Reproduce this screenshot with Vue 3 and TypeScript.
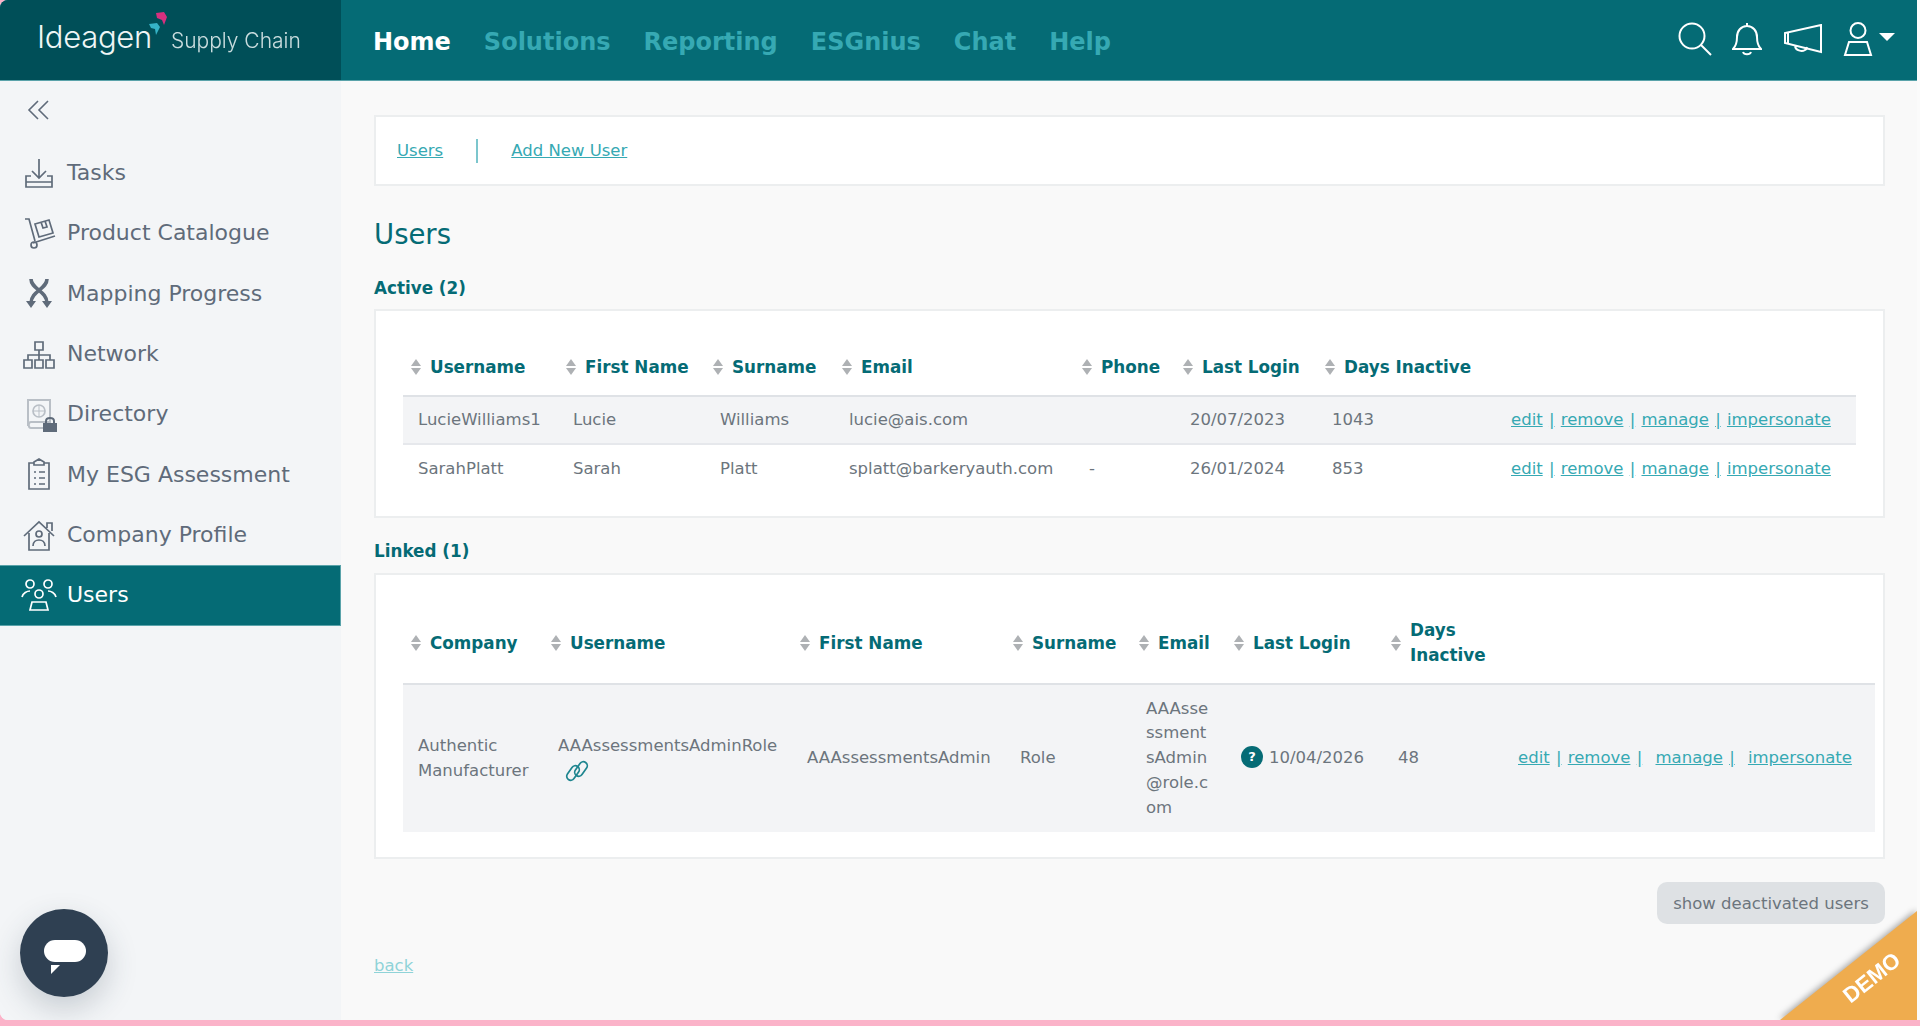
<script setup lang="ts">
interface Col { w: number; label?: string; lines?: string[] }
const activeCols: Col[] = [
  { w: 155, label: 'Username' }, { w: 147, label: 'First Name' }, { w: 129, label: 'Surname' },
  { w: 240, label: 'Email' }, { w: 101, label: 'Phone' }, { w: 142, label: 'Last Login' },
  { w: 179, label: 'Days Inactive' }, { w: 360 }
]
const activeRows = [
  ['LucieWilliams1', 'Lucie', 'Williams', 'lucie@ais.com', '', '20/07/2023', '1043'],
  ['SarahPlatt', 'Sarah', 'Platt', 'splatt@barkeryauth.com', '-', '26/01/2024', '853']
]
const linkedCols: Col[] = [
  { w: 140, label: 'Company' }, { w: 249, label: 'Username' }, { w: 213, label: 'First Name' },
  { w: 126, label: 'Surname' }, { w: 95, label: 'Email' }, { w: 157, label: 'Last Login' },
  { w: 120, lines: ['Days', 'Inactive'] }, { w: 372 }
]
const nav = ['Solutions', 'Reporting', 'ESGnius', 'Chat', 'Help']
const menu = ['Tasks', 'Product Catalogue', 'Mapping Progress', 'Network', 'Directory', 'My ESG Assessment', 'Company Profile', 'Users']
</script>

<template>
  <div class="app">
    <header class="top">
      <div class="brand">
        <span class="ideagen">Ideagen</span>
        <svg class="mark" viewBox="0 0 22 28" width="22" height="28">
          <path d="M9 3l8-1 3 5-3 8-2-5-5-2z" fill="#d6307f" />
          <path d="M2 14l8-1 3 4-4 8-1-6-4-1z" fill="#35b3c6" />
        </svg>
        <span class="supply">Supply Chain</span>
      </div>
      <nav class="mainnav">
        <a class="home">Home</a>
        <a v-for="n in nav" :key="n">{{ n }}</a>
      </nav>
      <div class="tools">
        <svg class="srch" width="34" height="34" viewBox="0 0 34 34" fill="none" stroke="#fff" stroke-width="2">
          <circle cx="14" cy="14" r="12.5" /><path d="M23 23l10 10" />
        </svg>
        <svg width="30" height="34" viewBox="0 0 30 34" fill="none" stroke="#fff" stroke-width="2">
          <path d="M1 27h28c-3-3-4-6-4-12 0-6-4-11-10-11S5 9 5 15c0 6-1 9-4 12zM15 4V1M11 30c1 3 7 3 8 0" />
        </svg>
        <svg width="38" height="30" viewBox="0 0 38 30" fill="none" stroke="#fff" stroke-width="2">
          <path d="M1 9v10l36 9V1zM4 9v10M11 21c0 7 11 8 12 2" />
        </svg>
        <div class="usr">
          <svg width="30" height="34" viewBox="0 0 30 34" fill="none" stroke="#fff" stroke-width="2">
            <circle cx="15" cy="8.5" r="7.5" /><path d="M6 20h18l4 13H2z" />
          </svg>
          <span class="caret"></span>
        </div>
      </div>
    </header>

    <div class="body">
      <aside class="side">
        <svg class="collapse" width="24" height="20" viewBox="0 0 24 20" fill="none" stroke="#5f6b7a" stroke-width="1.6">
          <path d="M11 1L2 10l9 9M21 1l-9 9 9 9" />
        </svg>
        <ul class="menu">
          <li v-for="m in menu" :key="m" :class="{ on: m === 'Users' }">
            <svg class="ic" width="36" height="36" viewBox="0 0 36 36" fill="none" stroke="currentColor" stroke-width="1.7">
              <g v-if="m === 'Tasks'">
                <path d="M18 4v19M11 16l7 7 7-7M10 21H5v11h26V21h-5M5 27h26" />
              </g>
              <g v-else-if="m === 'Product Catalogue'">
                <path d="M4 4h4l6 22M12 28l22-7" /><circle cx="13" cy="30" r="3" />
                <path d="M14 9l14-4 4 13-14 4zM20 7l2 6 4-1-2-6" />
              </g>
              <g v-else-if="m === 'Mapping Progress'">
                <path d="M10 4c0 10 16 12 16 24M26 4c0 10-16 12-16 24" stroke-width="3.6" />
                <path d="M5 26h10l-5 7zM21 26h10l-5 7z" fill="currentColor" stroke="none" />
              </g>
              <g v-else-if="m === 'Network'">
                <path d="M14 6h8v8h-8zM3 24h8v8H3zM14 24h8v8h-8zM25 24h8v8h-8zM18 14v10M7 24v-5h22v5" />
              </g>
              <g v-else-if="m === 'Directory'">
                <path d="M7 30V4h22v22H10c-3 0-3 6 0 6h14" stroke="#b9bfc6" stroke-width="2" />
                <circle cx="18" cy="15" r="6" stroke="#b9bfc6" /><path d="M12 15h12M18 9v12" stroke="#b9bfc6" stroke-width="1" />
                <rect x="22" y="27" width="14" height="11" fill="currentColor" stroke="none" />
                <path d="M25 27v-2c0-4 8-4 8 0v2" stroke-width="2" />
              </g>
              <g v-else-if="m === 'My ESG Assessment'">
                <path d="M13 7h-5v26h20V7h-5M13 9V6l5-3 5 3v3zM13 16h2M13 22h2M13 28h2M18 16h6M18 22h6M18 28h6" />
              </g>
              <g v-else-if="m === 'Company Profile'">
                <path d="M3 19L18 5l15 14M8 16v17h20V16M26 11V6h5v8" />
                <circle cx="18" cy="17" r="3" /><path d="M12 29c0-8 12-8 12 0" />
              </g>
              <g v-else>
                <circle cx="9" cy="7" r="4" /><circle cx="27" cy="7" r="4" /><circle cx="18" cy="17" r="4" />
                <path d="M1 20c1-4 5-6 8-6M35 20c-1-4-5-6-8-6M11 25h14l2 8H9z" />
              </g>
            </svg>
            <span>{{ m }}</span>
          </li>
        </ul>
        <div class="chat">
          <span class="pill"></span>
          <span class="tail"></span>
        </div>
      </aside>

      <main class="main">
        <div class="crumbs card">
          <a>Users</a>
          <i class="sep"></i>
          <a>Add New User</a>
        </div>
        <h1>Users</h1>

        <h2>Active (2)</h2>
        <div class="card tablecard">
          <table class="tbl act">
            <colgroup><col v-for="(c, i) in activeCols" :key="i" :style="{ width: c.w + 'px' }" /></colgroup>
            <thead>
              <tr>
                <th v-for="(c, i) in activeCols" :key="i">
                  <div v-if="c.label" class="th"><span class="sort"></span>{{ c.label }}</div>
                </th>
              </tr>
            </thead>
            <tbody>
              <tr v-for="(r, ri) in activeRows" :key="ri">
                <td v-for="(v, vi) in r" :key="vi">{{ v }}</td>
                <td class="acts"><a>edit</a> <a class="p">|</a> <a>remove</a> <a class="p">|</a> <a>manage</a> <a class="p">|</a> <a>impersonate</a></td>
              </tr>
            </tbody>
          </table>
        </div>

        <h2 class="linked">Linked (1)</h2>
        <div class="card tablecard lcard">
          <table class="tbl lnk">
            <colgroup><col v-for="(c, i) in linkedCols" :key="i" :style="{ width: c.w + 'px' }" /></colgroup>
            <thead>
              <tr>
                <th v-for="(c, i) in linkedCols" :key="i">
                  <div v-if="c.label" class="th"><span class="sort"></span>{{ c.label }}</div>
                  <div v-else-if="c.lines" class="th"><span class="sort"></span><span class="two"><span v-for="l in c.lines" :key="l">{{ l }}</span></span></div>
                </th>
              </tr>
            </thead>
            <tbody>
              <tr>
                <td>Authentic<br />Manufacturer</td>
                <td>AAAssessmentsAdminRole<br />
                  <svg class="chain" width="30" height="24" viewBox="0 0 30 24" fill="none" stroke="#1e858f" stroke-width="1.7">
                    <rect x="7" y="6" width="8" height="16" rx="4" transform="rotate(35 11 14)" />
                    <rect x="15" y="2" width="8" height="16" rx="4" transform="rotate(35 19 10)" />
                  </svg>
                </td>
                <td>AAAssessmentsAdmin</td>
                <td>Role</td>
                <td class="mail">AAAsse<br />ssment<br />sAdmin<br />@role.c<br />om</td>
                <td class="login"><span class="q">?</span>10/04/2026</td>
                <td>48</td>
                <td class="acts wide"><a>edit</a> <a class="p">|</a> <a>remove</a> <a class="p">|</a> <a class="m">manage</a> <a class="p">|</a> <a class="m">impersonate</a></td>
              </tr>
            </tbody>
          </table>
        </div>

        <div class="btnrow"><button>show deactivated users</button></div>
        <a class="back">back</a>
      </main>
    </div>

    <div class="demo"><span>DEMO</span></div>
  </div>
</template>

<style>
html, body { margin: 0; background: #fbb3c9; }
</style>

<style scoped>
.app {
  position: relative;
  width: 1920px;
  height: 1020px;
  display: flex;
  flex-direction: column;
  overflow: hidden;
  box-sizing: border-box;
  border-right: 3px solid #fbfbfb;
  border-radius: 8px 0 0 8px;
  background: #f9f9f9;
  font-family: "DejaVu Sans", Verdana, sans-serif;
  font-size: 16.5px;
  color: #6c757d;
}
.top { height: 81px; flex: none; display: flex; background: #056b75; border-bottom: 1px solid #5aa3aa; box-sizing: border-box; }
.brand { width: 341px; flex: none; background: #004f58; position: relative; display: flex; align-items: baseline; padding: 21px 0 0 37px; box-sizing: border-box; color: #eef6f6; font-family: Inter, sans-serif; font-weight: 300; }
.ideagen { font-size: 31px; line-height: 31px; letter-spacing: -0.3px; }
.mark { position: absolute; left: 147px; top: 10px; }
.supply { font-size: 21px; margin-left: 19px; opacity: .85; }
.mainnav { display: flex; gap: 33px; align-items: center; padding: 3px 0 0 32px; font-size: 24px; font-weight: 700; color: #45bac5; }
.home { color: #fff; }
.tools { margin-left: auto; display: flex; align-items: center; gap: 22px; padding-right: 22px; padding-bottom: 3px; }
.srch { margin-right: -2px; }
.usr { display: flex; align-items: center; gap: 6px; margin-left: -1px; }
.caret { border: 8px solid transparent; border-top: 8px solid #fff; border-bottom: 0; margin-top: -4px; }
.body { flex: 1; display: flex; min-height: 0; }
.side { width: 341px; flex: none; background: #f3f5f7; position: relative; }
.collapse { display: block; margin: 19px 0 0 27px; }
.menu { list-style: none; margin: 23px 0 0; padding: 0; }
.menu li { height: 60.33px; display: flex; align-items: center; font-size: 22px; color: #5f6b7a; box-sizing: border-box; padding: 0 0 1px 21px; }
.menu li span { margin-left: 10px; }
.menu li.on { background: #056b75; color: #fff; border: 1px solid #5aa3aa; border-left: 0; }
.ic { flex: none; }
.chat { position: absolute; left: 20px; top: 828px; width: 88px; height: 88px; border-radius: 50%; background: #2f4052; box-shadow: 0 12px 30px rgba(47, 64, 82, .22); }
.pill { position: absolute; left: 24px; top: 31px; width: 42px; height: 22px; border-radius: 11px; background: #fff; }
.tail { position: absolute; left: 31px; top: 56px; width: 0; height: 0; border-top: 9px solid #fff; border-right: 9px solid transparent; }
.main { flex: 1; padding: 34px 32px 0 33px; min-width: 0; }
.card { background: #fff; border: 2px solid #eceeef; box-sizing: border-box; }
.crumbs { height: 71px; display: flex; align-items: center; padding-left: 21px; }
a { color: #36a9b3; }
.crumbs a { text-decoration: underline; }
.sep { width: 2px; height: 24px; background: #7cc6cd; margin: 0 33px; }
h1 { margin: 28px 0 0; font-size: 27.5px; line-height: 40px; font-weight: 400; color: #056b75; }
h2 { margin: 22px 0 0; font-size: 16.8px; line-height: 24px; font-weight: 700; color: #056b75; }
.linked { margin-top: 21px; }
.tablecard { margin-top: 9px; height: 209px; padding: 27px 27px 0; overflow: visible; }
.lcard { height: 286px; margin-top: 10px; }
.tbl { border-collapse: collapse; table-layout: fixed; width: 1453px; }
.act { width: 1453px; }
.lnk { width: 1472px; }
th { height: 58px; padding: 0 0 0 8px; text-align: left; border-bottom: 2px solid #dfe2e6; color: #056b75; font-size: 16.8px; font-weight: 700; box-sizing: border-box; }
.lnk th { height: 82px; }
.th { display: flex; align-items: center; }
.sort { position: relative; width: 11px; height: 16px; margin-right: 8px; flex: none; }
.sort::before, .sort::after { content: ""; position: absolute; left: 0; border: 5px solid transparent; }
.sort::before { top: 0; border-bottom: 7px solid #aeb1b4; border-top: 0; }
.sort::after { bottom: 0; border-top: 7px solid #aeb1b4; border-bottom: 0; }
.two { display: flex; flex-direction: column; line-height: 24.7px; }
td { padding: 0 0 0 15px; height: 48px; line-height: 24.7px; vertical-align: middle; overflow: visible; white-space: nowrap; }
.act tbody tr:nth-child(1) { background: #f3f4f6; }
.act tbody tr:nth-child(1) td { border-bottom: 2px solid #e6e8ec; height: 46px; }
.lnk tbody tr { background: #f3f4f6; }
.lnk td { height: 147px; }
.acts a { text-decoration: underline; }
.acts { padding-left: 15px; word-spacing: 1px; }
.wide .m { margin-left: 7px; }
.chain { display: block; margin: 0 0 0 4px; }
.login { padding-left: 15px; }
.q { display: inline-block; width: 22px; height: 22px; border-radius: 50%; background: #056b75; color: #fff; font-size: 13px; font-weight: 700; line-height: 22px; text-align: center; margin-right: 6px; vertical-align: 2px; }
.btnrow { display: flex; justify-content: flex-end; margin-top: 23px; }
button { height: 42px; width: 228px; border: 0; border-radius: 10px; background: #dee1e4; color: #6c757d; font: 16.5px "DejaVu Sans", Verdana, sans-serif; padding: 0; }
.back { display: block; margin-top: 30px; line-height: 24px; width: 40px; color: #8fd3d8; text-decoration: underline; }
.demo { position: absolute; right: 0; bottom: 0; width: 137px; height: 109px; filter: drop-shadow(-1px -1px 3px rgba(0, 0, 0, .35)); }
.demo::before { content: ""; position: absolute; inset: 0; background: #efac4e; clip-path: polygon(100% 0, 100% 100%, 0 100%); }
.demo span { position: absolute; left: 59px; top: 54px; transform: rotate(-38.5deg); color: #fff; font: 700 22px "Liberation Sans", Arial, sans-serif; }
</style>
